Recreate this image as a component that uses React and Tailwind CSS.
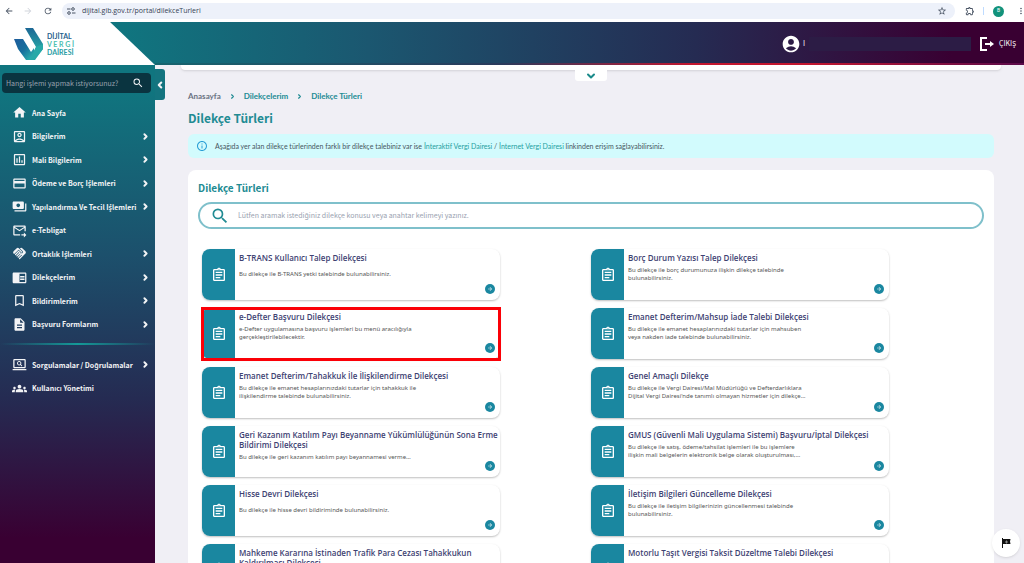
import React, { useState } from "react";
import {
  MdHome,
  MdOutlineAccountBox,
  MdOutlineAssessment,
  MdCreditCard,
  MdPayments,
  MdOutlineForwardToInbox,
  MdHandshake,
  MdChromeReaderMode,
  MdBookmarkBorder,
  MdDescription,
  MdOutlineScreenSearchDesktop,
  MdGroups,
  MdOutlineAssignment,
  MdAccountCircle,
  MdSearch,
  MdArrowBack,
  MdArrowForward,
  MdRefresh,
  MdStarBorder,
  MdOutlineExtension,
  MdMoreVert,
  MdInfoOutline,
} from "react-icons/md";
import { ChevronRight, ChevronLeft, ChevronDown } from "lucide-react";

const MENU = [
  { label: "Ana Sayfa", icon: MdHome },
  { label: "Bilgilerim", icon: MdOutlineAccountBox, sub: true },
  { label: "Mali Bilgilerim", icon: MdOutlineAssessment, sub: true },
  { label: "Ödeme ve Borç İşlemleri", icon: MdCreditCard, sub: true },
  { label: "Yapılandırma Ve Tecil İşlemleri", icon: MdPayments, sub: true },
  { label: "e-Tebligat", icon: MdOutlineForwardToInbox },
  { label: "Ortaklık İşlemleri", icon: MdHandshake, sub: true },
  { label: "Dilekçelerim", icon: MdChromeReaderMode, sub: true },
  { label: "Bildirimlerim", icon: MdBookmarkBorder, sub: true },
  { label: "Başvuru Formlarım", icon: MdDescription, sub: true },
];

const MENU_BOTTOM = [
  { label: "Sorgulamalar / Doğrulamalar", icon: MdOutlineScreenSearchDesktop, sub: true },
  { label: "Kullanıcı Yönetimi", icon: MdGroups },
];

const PETITIONS = [
  { title: "B-TRANS Kullanıcı Talep Dilekçesi", text: "Bu dilekçe ile B-TRANS yetki talebinde bulunabilirsiniz." },
  { title: "Borç Durum Yazısı Talep Dilekçesi", text: "Bu dilekçe ile borç durumunuza ilişkin dilekçe talebinde\nbulunabilirsiniz." },
  { title: "e-Defter Başvuru Dilekçesi", text: "e-Defter uygulamasına başvuru işlemleri bu menü aracılığıyla\ngerçekleştirilebilecektir.", marked: true },
  { title: "Emanet Defterim/Mahsup İade Talebi Dilekçesi", text: "Bu dilekçe ile emanet hesaplarınızdaki tutarlar için mahsuben\nveya nakden iade talebinde bulunabilirsiniz." },
  { title: "Emanet Defterim/Tahakkuk İle İlişkilendirme Dilekçesi", text: "Bu dilekçe ile emanet hesaplarınızdaki tutarlar için tahakkuk ile\nilişkilendirme talebinde bulunabilirsiniz." },
  { title: "Genel Amaçlı Dilekçe", text: "Bu dilekçe ile Vergi Dairesi/Mal Müdürlüğü ve Defterdarlıklara\nDijital Vergi Dairesi'nde tanımlı olmayan hizmetler için dilekçe…" },
  { title: "Geri Kazanım Katılım Payı Beyanname Yükümlülüğünün Sona Erme\nBildirimi Dilekçesi", text: "Bu dilekçe ile geri kazanım katılım payı beyannamesi verme…", long: true },
  { title: "GMUS (Güvenli Mali Uygulama Sistemi) Başvuru/İptal Dilekçesi", text: "Bu dilekçe ile satış, ödeme/tahsilat işlemleri ile bu işlemlere\nilişkin mali belgelerin elektronik belge olarak oluşturulması,…" },
  { title: "Hisse Devri Dilekçesi", text: "Bu dilekçe ile hisse devri bildiriminde bulunabilirsiniz." },
  { title: "İletişim Bilgileri Güncelleme Dilekçesi", text: "Bu dilekçe ile iletişim bilgilerinizin güncellenmesi talebinde\nbulunabilirsiniz." },
  { title: "Mahkeme Kararına İstinaden Trafik Para Cezası Tahakkukun\nKaldırılması Dilekçesi", text: "", long: true },
  { title: "Motorlu Taşıt Vergisi Taksit Düzeltme Talebi Dilekçesi", text: "" },
];

function BrowserBar() {
  return (
    <div className="flex h-[22px] shrink-0 items-center bg-white pl-1 text-gray-600 font-[Roboto,sans-serif]">
      <button aria-label="Geri" className="w-[19px]"><MdArrowBack className="size-[10px]" /></button>
      <button aria-label="İleri" className="w-[20px] text-gray-300"><MdArrowForward className="size-[10px]" /></button>
      <button aria-label="Yenile" className="w-[19px]"><MdRefresh className="size-[10px]" /></button>
      <div className="flex h-4 flex-1 items-center rounded-full bg-[#edf1fa] pr-2 pl-1">
        <svg viewBox="0 0 10 10" className="size-[10px]" fill="none" stroke="currentColor">
          <path d="M1 3h3.5M6 7h3.5" />
          <circle cx="7" cy="3" r="1.3" />
          <circle cx="3" cy="7" r="1.3" />
        </svg>
        <input
          aria-label="Adres"
          className="ml-[6px] min-w-0 flex-1 bg-transparent font-['Open_Sans',sans-serif] text-[7px] leading-3 text-gray-700 outline-none"
          defaultValue="dijital.gib.gov.tr/portal/dilekceTurleri"
        />
        <button aria-label="Yer işareti"><MdStarBorder className="size-[10px]" /></button>
      </div>
      <button aria-label="Uzantılar" className="ml-[10px]"><MdOutlineExtension className="size-[10px]" /></button>
      <span className="ml-2 h-2 w-px bg-blue-200" />
      <span className="ml-[9px] flex size-[11px] items-center justify-center rounded-full bg-[#12927b] text-[5px] text-white">B</span>
      <button aria-label="Menü" className="-mr-1 ml-3 w-3"><MdMoreVert className="size-[10px]" /></button>
    </div>
  );
}

function Logo() {
  return (
    <div className="flex h-full w-[155px] items-center bg-white pl-[14px] [clip-path:polygon(0_0,71%_0,100%_100%,0_100%)]">
      <svg viewBox="0 0 30 34" className="h-[34px] w-[30px]">
        <defs>
          <linearGradient id="armLeft" x1="0" y1="0" x2="1" y2="1">
            <stop offset="0" stopColor="#1d5c9c" />
            <stop offset="0.5" stopColor="#176f9d" />
            <stop offset="1" stopColor="#2fc0b0" />
          </linearGradient>
          <linearGradient id="armRight" x1="0" y1="0" x2="0" y2="1">
            <stop offset="0" stopColor="#1c6795" />
            <stop offset="1" stopColor="#2cc3ad" />
          </linearGradient>
        </defs>
        <path d="M11 1h8l10 16v5l-9 11h-5l7-13z" fill="url(#armRight)" />
        <path d="M0 12h9l8 13 3-4v7l-3 5h-5L4 22z" fill="url(#armLeft)" />
        <path d="M22 20l-6 13h5l8-11v-5z" fill="#27a9a8" />
      </svg>
      <div className="ml-[3px] font-[Lato,sans-serif] text-[7px] leading-[8px] font-bold text-[#1f5f8d]">
        <div>DİJİTAL</div>
        <div className="text-[#4cc0b0]">V E R G İ</div>
        <div className="text-[#2a9da4]">DAİRESİ</div>
      </div>
    </div>
  );
}

function Header() {
  return (
    <header className="relative flex h-[43px] shrink-0 items-center bg-[linear-gradient(90deg,#10757f_12%,#1b5770_36%,#252b52_68%,#390032_93%)] text-white">
      <Logo />
      <div className="ml-auto flex items-center pr-2">
        <MdAccountCircle className="size-5" />
        <span className="ml-[2px] text-[7px]">I</span>
        <span className="ml-1 h-[14px] w-[162px] bg-[#2c1c45]" />
        <button className="ml-2 flex items-center gap-1">
          <svg viewBox="0 0 16 16" className="size-4" fill="none" stroke="currentColor" strokeWidth="2">
            <path d="M8 2H2v12h6" />
            <path d="M6 8h6" />
            <path d="M11 5l4 3-4 3z" fill="currentColor" stroke="none" />
          </svg>
          <span className="text-[7px]">ÇIKIŞ</span>
        </button>
      </div>
      <div className="absolute right-0 bottom-0 left-[155px] h-[2px] bg-[linear-gradient(90deg,#17656f_0%,#2a3a5c_40%,#c3162f_62%,#c3162f_75%,#5a0a4a_100%)]" />
    </header>
  );
}

function MenuItem({ item }) {
  const Icon = item.icon;
  return (
    <li className="flex">
      <a href="#" className="flex flex-1 items-center pr-[5px] pl-3">
        <Icon className="size-[15px] shrink-0" />
        <span className="ml-[5px] flex-1 whitespace-nowrap">{item.label}</span>
        {item.sub && <ChevronRight className="size-[9px] shrink-0" strokeWidth={5} />}
      </a>
    </li>
  );
}

function Sidebar() {
  return (
    <aside className="relative w-[155px] shrink-0 bg-[linear-gradient(180deg,#10757f_5%,#1c506c_38%,#252b52_67%,#390032_95%)] text-[7px] font-semibold text-gray-100">
      <label className="mt-2 mr-1 ml-[2px] flex h-5 items-center rounded-sm bg-[#0a3440] pr-[7px] pl-1">
        <input
          aria-label="İşlem ara"
          placeholder="Hangi işlemi yapmak istiyorsunuz?"
          className="min-w-0 flex-1 bg-transparent text-[7px] font-normal outline-none placeholder:text-gray-400"
        />
        <MdSearch className="size-3" />
      </label>
      <button aria-label="Menüyü daralt" className="absolute top-1 left-full z-10 flex h-[31px] w-[10px] items-center justify-center rounded-r-[3px] bg-[#14747f]">
        <ChevronLeft className="size-[10px]" strokeWidth={5} />
      </button>
      <ul className="mt-2 grid h-[235px] auto-rows-fr">
        {MENU.map((item) => <MenuItem key={item.label} item={item} />)}
      </ul>
      <div className="mt-[7px] h-[2px] bg-linear-to-r from-transparent via-[#149a98] to-transparent" />
      <ul className="mt-2 grid h-[47px] auto-rows-fr">
        {MENU_BOTTOM.map((item) => <MenuItem key={item.label} item={item} />)}
      </ul>
    </aside>
  );
}

function PetitionCard({ item }) {
  return (
    <div className="relative flex h-[51px] w-[298px] rounded-lg bg-white shadow-[0_1px_2px_rgba(0,0,0,0.25)]">
      <div className="flex w-[33px] shrink-0 items-center justify-center rounded-l-lg bg-[#1a87a0] text-white">
        <MdOutlineAssignment className="size-4" />
      </div>
      <div className="min-w-0 flex-1 pt-1 pl-1">
        <h3 className="font-['Open_Sans','Noto_Sans',sans-serif] text-[8px] leading-[10px] font-semibold whitespace-pre text-[#3e4272]">{item.title}</h3>
        <div className={`mt-[3px] flex items-center ${item.long ? "" : "min-h-4"}`}>
          <p className="font-['Noto_Sans',sans-serif] text-[6px] leading-[8px] whitespace-pre text-[#555]">{item.text}</p>
        </div>
      </div>
      <button aria-label={item.title} className="absolute right-[5px] bottom-[6px] flex size-[10px] items-center justify-center rounded-full bg-[#1a87a0] text-white">
        <MdArrowForward className="size-[6px]" />
      </button>
      {item.marked && <div className="pointer-events-none absolute -inset-x-px -top-px -bottom-[2px] border-3 border-[#fb0007]" />}
    </div>
  );
}

function Breadcrumb() {
  return (
    <nav className="mt-[20px] flex h-3 items-center gap-2 font-[Lato,sans-serif] text-[8px] font-bold text-[#218b93]">
      <a href="#" className="text-gray-500">Anasayfa</a>
      <ChevronRight className="size-[7px]" strokeWidth={4} />
      <a href="#">Dilekçelerim</a>
      <ChevronRight className="size-[7px]" strokeWidth={4} />
      <a href="#">Dilekçe Türleri</a>
    </nav>
  );
}

export default function App() {
  const [query, setQuery] = useState("");
  const needle = query.toLocaleLowerCase("tr");
  const visible = PETITIONS.filter((p) => p.title.toLocaleLowerCase("tr").includes(needle));

  return (
    <div className="flex h-screen flex-col overflow-hidden bg-[#f0eff5] font-['Noto_Sans_CJK_SC','Noto_Sans',sans-serif]">
      <BrowserBar />
      <Header />
      <div className="flex min-h-0 flex-1">
        <Sidebar />
        <main className="flex min-w-0 flex-1 flex-col pr-[23px] pl-[26px]">
          <div className="h-[5px] shrink-0 rounded-b-sm bg-white shadow-sm" />
          <button aria-label="Aç" className="flex h-[11px] w-8 shrink-0 items-center justify-center self-center rounded-b-[3px] bg-white text-[#1a8a8a]">
            <ChevronDown className="size-3" strokeWidth={4} />
          </button>

          <div className="px-[7px]">
            <div className="-mt-[11px]">
              <Breadcrumb />
            </div>
            <h1 className="mt-2 text-[12px] leading-4 font-bold text-[#218b93]">Dilekçe Türleri</h1>

            <div className="mt-2 flex h-6 items-center rounded-md bg-[#d2fbfd] pl-2 font-[Lato,sans-serif] text-[7px] text-[#46565e]">
              <MdInfoOutline className="mr-[7px] size-3 text-[#2a9fd6]" />
              <p>
                Aşağıda yer alan dilekçe türlerinden farklı bir dilekçe talebiniz var ise{" "}
                <a href="#" className="text-[#1fa09f]">İnteraktif Vergi Dairesi</a> /{" "}
                <a href="#" className="text-[#1fa09f]">İnternet Vergi Dairesi</a> linkinden erişim sağlayabilirsiniz.
              </p>
            </div>

            <section className="mt-3 rounded-t-lg bg-white px-[10px] pt-[12px] pb-5">
              <h2 className="text-[10px] leading-3 font-bold text-[#218b93]">Dilekçe Türleri</h2>
              <label className="mt-2 flex h-[27px] items-center rounded-full border-2 border-[#7fc0cb] pl-[10px]">
                <MdSearch className="size-5 text-[#218b93]" />
                <input
                  aria-label="Dilekçe ara"
                  value={query}
                  onChange={(e) => setQuery(e.target.value)}
                  placeholder="Lütfen aramak istediğiniz dilekçe konusu veya anahtar kelimeyi yazınız."
                  className="ml-2 flex-1 text-[7px] outline-none placeholder:text-gray-400"
                />
              </label>
              <div className="mt-5 grid grid-cols-2 gap-y-2 px-1">
                {visible.map((item) => <PetitionCard key={item.title} item={item} />)}
              </div>
            </section>
          </div>
        </main>
      </div>

      <button aria-label="Geri bildirim" className="fixed right-1 bottom-[6px] flex size-7 items-center justify-center rounded-full bg-white shadow-sm">
        <svg viewBox="0 0 10 10" className="size-[10px]">
          <path d="M1 0h1v1h7.500L9 3.500L9.500 6H2v4H1z" fill="#111" />
          <path d="M5 2.500h1v1h1v1H6v1H5v-1H4v-1h1z" fill="#888" />
        </svg>
      </button>
    </div>
  );
}
